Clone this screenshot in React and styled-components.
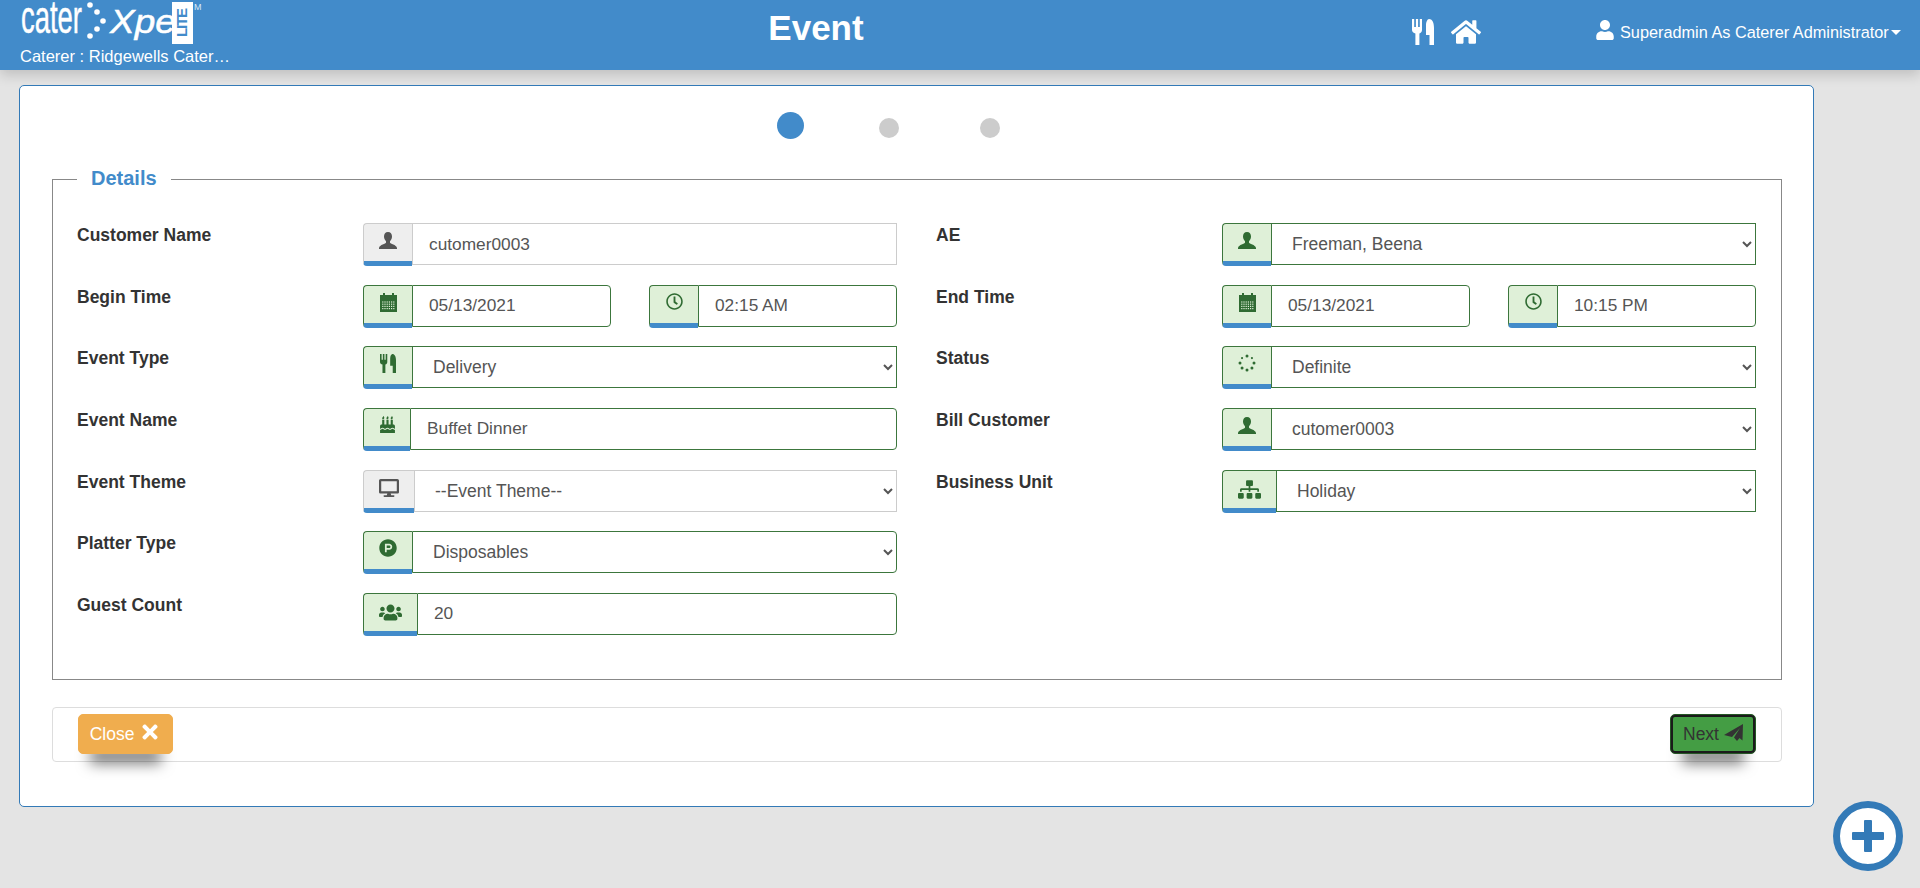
import React from "react";
import styled, { createGlobalStyle } from "styled-components";
import { FaBirthdayCake, FaDesktop, FaHome, FaProductHunt, FaRegClock, FaSitemap, FaTimes, FaUser, FaUsers } from "react-icons/fa";

const GlobalStyle = createGlobalStyle`
    html, body {
        margin: 0;
        overflow: hidden;
        background-color: #e4e4e4;
    }
    body {
        font-family: "Liberation Sans", Arial, sans-serif;
        color: #333;
    }
`
const Page = styled.div`
    min-height: 888px;
`
const Header = styled.header`
    background-color: #428bca;
    box-shadow: 0 5px 12px rgba(0, 0, 0, 0.16);
    color: #fff;
    display: grid;
    grid-template-columns: 400px 832px 363px 1fr;
    height: 70px;
`
const Brand = styled.div`
    padding-left: 20px;
`
const Logo = styled.svg`
    display: block;
    height: 46px;
    width: 190px;
`
const CatererName = styled.div`
    font-size: 16.5px;
    line-height: 20px;
    overflow: hidden;
    text-overflow: ellipsis;
    white-space: nowrap;
    width: 212px;
`
const Title = styled.h1`
    font-size: 35px;
    font-weight: bold;
    line-height: 56px;
    margin: 0;
    text-align: center;
`
const HeaderIcons = styled.div`
    align-items: center;
    display: flex;
    gap: 17px;
    height: 64px;
    padding-left: 180px;
`
const UserMenu = styled.div`
    align-items: center;
    display: flex;
    font-size: 16.3px;
    gap: 5px;
    height: 64px;
    white-space: nowrap;
`
const UserIcon = styled(FaUser)`
    margin-top: -4px;
`
const Caret = styled.span`
    border-left: 5px solid transparent;
    border-right: 5px solid transparent;
    border-top: 5px solid #fff;
    margin-left: -3px;
`
const Main = styled.main`
    padding: 15px 0 0 19px;
`
const Card = styled.div`
    background-color: #fff;
    border: 1px solid #337ab7;
    border-radius: 5px;
    box-sizing: border-box;
    height: 722px;
    padding: 26px 31px 0 32px;
    width: 1795px;
`
const Steps = styled.div`
    align-items: flex-end;
    display: flex;
    margin-bottom: 27px;
    padding-left: 725px;
`
const Dot = styled.span`
    background-color: ${props => props.$active ? "#428bca" : "#ccc"};
    border-radius: 50%;
    height: ${props => props.$active ? "27px" : "20px"};
    margin-bottom: ${props => props.$active ? "0" : "1px"};
    margin-left: ${props => props.$offset || 0}px;
    width: ${props => props.$active ? "27px" : "20px"};
`
const Fieldset = styled.fieldset`
    border: 1px solid #888;
    margin: 0;
    min-width: 0;
    padding: 31px 24px 44px;
`
const Legend = styled.legend`
    color: #428bca;
    font-size: 20px;
    font-weight: bold;
    line-height: 24px;
    padding: 0 14px 2px;
`
const Columns = styled.div`
    display: grid;
    gap: 39px;
    grid-template-columns: 820px 820px;
`
const Column = styled.div`
    display: flex;
    flex-direction: column;
    gap: 19.67px;
`
const Row = styled.div`
    display: grid;
    grid-template-columns: 286px minmax(0, 1fr);
`
const Label = styled.label`
    color: #333;
    font-size: 17.5px;
    font-weight: bold;
    line-height: 22px;
    padding-top: 1px;
`
const Pair = styled.div`
    display: grid;
    gap: 38px;
    grid-template-columns: minmax(0, 1fr) minmax(0, 1fr);
`
const Group = styled.div`
    display: flex;
    height: 42px;
`
const Addon = styled.span`
    align-items: flex-start;
    background-color: ${props => props.$plain ? "#eee" : "#dff0d8"};
    border: 1px solid ${props => props.$plain ? "#ccc" : "#3c763d"};
    border-bottom: 5px solid #428bca;
    border-radius: 4px 0 0 4px;
    border-right: 0;
    box-sizing: border-box;
    color: ${props => props.$plain ? "#555" : "#2f6b32"};
    display: flex;
    flex: none;
    font-size: 18px;
    height: 43px;
    justify-content: center;
    padding-top: 7px;
    width: ${props => props.$width || 49}px;
`
const Input = styled.input`
    background-color: #fff;
    border: 1px solid ${props => props.$plain ? "#ccc" : "#3c763d"};
    border-radius: ${props => props.$square ? "0" : "0 4px 4px 0"};
    box-sizing: border-box;
    color: #555;
    flex: 1;
    font-family: inherit;
    font-size: 17.3px;
    height: 42px;
    min-width: 0;
    padding: 0 16px;
`
const Select = styled.select`
    background-color: #fff;
    border: 1px solid ${props => props.$plain ? "#ccc" : "#3c763d"};
    border-radius: ${props => props.$round ? "0 4px 4px 0" : "0"};
    box-sizing: border-box;
    color: #555;
    flex: 1;
    font-family: inherit;
    font-size: 17.5px;
    height: 42px;
    min-width: 0;
    padding: 0 16px;
`
const Footer = styled.div`
    align-items: center;
    border: 1px solid #ddd;
    border-radius: 4px;
    box-sizing: border-box;
    display: flex;
    height: 55px;
    justify-content: space-between;
    margin-top: 27px;
    padding: 0 25px;
`
const Button = styled.button`
    align-items: center;
    background-color: ${props => props.$primary ? "#449d44" : "#f0ad4e"};
    border: 1px solid ${props => props.$primary ? "#255625" : "#f0ad4e"};
    border-radius: 5px;
    box-shadow: 0 22px 14px -12px rgba(0, 0, 0, 0.5);
    color: ${props => props.$primary ? "#333" : "#fff"};
    display: flex;
    font-family: inherit;
    font-size: 17.5px;
    gap: 5px;
    height: 40px;
    justify-content: center;
    outline: ${props => props.$primary ? "2px solid #1a1a1a" : "none"};
    outline-offset: -3px;
    padding: 0;
    width: ${props => props.$primary ? "86px" : "95px"};
`
const CloseIcon = styled(FaTimes)`
    margin-top: -5px;
`
const AddButton = styled.button`
    align-items: center;
    background-color: #fff;
    border: 7px solid #337ab7;
    border-radius: 50%;
    bottom: 17px;
    box-sizing: border-box;
    color: #337ab7;
    display: flex;
    height: 70px;
    justify-content: center;
    padding: 0;
    position: fixed;
    right: 17px;
    width: 70px;
`

function BustIcon() {
    return (
        <svg width="20" height="20" viewBox="0 0 20 20" fill="currentColor">
            <path d="M10 1c2.600 0 4 2 4 4.600 0 2-1 3.800-2 4.600v1.600c0 .8 6.500 2 7 5.200v1H1v-1c.5-3.200 7-4.400 7-5.200v-1.600C7 9.400 6 7.600 6 5.600 6 3 7.400 1 10 1z" />
        </svg>
    )
}

function CalendarIcon() {
    const cells = []
    for (let row = 0; row < 4; row++) {
        for (let col = 0; col < 6; col++) {
            cells.push(<rect key={`${row}-${col}`} x={2.2 + col * 2.2} y={8.4 + row * 2.2} width="1.2" height="1.2" fill="#dff0d8" />)
        }
    }
    return (
        <svg width="17" height="19" viewBox="0 0 17 19" fill="currentColor">
            <path d="M3 0h2v2h7V0h2v2h3v17H0V2h3z" />
            {cells}
        </svg>
    )
}

function CutleryIcon({ width = 16, height = 19 }) {
    return (
        <svg width={width} height={height} viewBox="0 0 22 26" fill="currentColor">
            <path d="M0 0h2.200v8h1.700V0h2.200v8h1.700V0H10v11c0 2-1.200 3-2.600 3.500V26H3.400V14.500C1.600 14 0 13 0 11z" />
            <path d="M17 0c3 0 5 3 5 9v17h-4.500V16H14V6c0-3 1.500-6 3-6z" />
        </svg>
    )
}

function DotsIcon() {
    const dots = [0, 45, 90, 135, 180, 225, 270, 315]
    return (
        <svg width="18" height="18" viewBox="-9 -9 18 18" fill="currentColor">
            {dots.map(angle => (
                <circle
                    key={angle}
                    cx={7 * Math.sin(angle * Math.PI / 180)}
                    cy={-7 * Math.cos(angle * Math.PI / 180)}
                    r={angle === 45 || angle === 315 ? 1.1 : 1.5}
                />
            ))}
        </svg>
    )
}

function SendIcon() {
    return (
        <svg width="19" height="17" viewBox="0 0 19 17" fill="currentColor" style={{ marginTop: -3 }}>
            <path d="M19 0L0 11l8 2L16 4l-6 9.500L13 17l2.500-3 3 2.500z" />
        </svg>
    )
}

function PlusIcon() {
    return (
        <svg width="32" height="32" viewBox="0 0 32 32" fill="currentColor">
            <path d="M12 1a1 1 0 0 1 1-1h6a1 1 0 0 1 1 1v11h11a1 1 0 0 1 1 1v6a1 1 0 0 1-1 1H20v11a1 1 0 0 1-1 1h-6a1 1 0 0 1-1-1V20H1a1 1 0 0 1-1-1v-6a1 1 0 0 1 1-1h11z" />
        </svg>
    )
}

function BrandLogo() {
    const dots = [[70, 5], [77, 12], [83, 21], [77, 29], [70, 36]]
    return (
        <Logo viewBox="0 0 190 46">
            <text transform="translate(1 33) scale(0.584 1)" fontFamily="Liberation Sans" fontSize="47" fill="#fff" stroke="#fff" strokeWidth="0.5">cater</text>
            {dots.map(([cx, cy]) => (
                <circle key={cy} cx={cx} cy={cy} r="2.800" fill="#fff" />
            ))}
            <text transform="translate(90 33) scale(1.12 1)" fontFamily="Liberation Sans" fontStyle="italic" fontSize="33" fill="#fff" stroke="#fff" strokeWidth="0.5">Xpe</text>
            <rect x="152" y="2" width="21" height="42" fill="#fff" />
            <text transform="translate(167 37) rotate(-90)" fontFamily="Liberation Sans" fontWeight="bold" fontSize="15" fill="#428bca" textLength="29">LITE</text>
            <text x="174" y="10" fontFamily="Liberation Sans" fontSize="9" fill="#dbe8f4">M</text>
        </Logo>
    )
}

function Field({ label, children }) {
    return (
        <Row>
            <Label>{label}</Label>
            {children}
        </Row>
    )
}

function TextGroup({ icon, value, width, plain, square }) {
    return (
        <Group>
            <Addon $plain={plain} $width={width}>{icon}</Addon>
            <Input defaultValue={value} $plain={plain} $square={square} />
        </Group>
    )
}

function SelectGroup({ icon, value, width, plain, round }) {
    return (
        <Group>
            <Addon $plain={plain} $width={width}>{icon}</Addon>
            <Select defaultValue={value} $plain={plain} $round={round}>
                <option>{value}</option>
            </Select>
        </Group>
    )
}

function DateTime({ date, time }) {
    return (
        <Pair>
            <TextGroup icon={<CalendarIcon />} value={date} />
            <TextGroup icon={<FaRegClock size={17} />} value={time} />
        </Pair>
    )
}

function App() {
    return (
        <Page>
            <GlobalStyle />
            <Header>
                <Brand>
                    <BrandLogo />
                    <CatererName>Caterer : Ridgewells Catering</CatererName>
                </Brand>
                <Title>Event</Title>
                <HeaderIcons>
                    <CutleryIcon width={22} height={26} />
                    <FaHome size={30} />
                </HeaderIcons>
                <UserMenu>
                    <UserIcon size={20} />
                    <span>Superadmin As Caterer Administrator</span>
                    <Caret />
                </UserMenu>
            </Header>
            <Main>
                <Card>
                    <Steps>
                        <Dot $active />
                        <Dot $offset={75} />
                        <Dot $offset={81} />
                    </Steps>
                    <Fieldset>
                        <Legend>Details</Legend>
                        <Columns>
                            <Column>
                                <Field label="Customer Name">
                                    <TextGroup icon={<BustIcon />} value="cutomer0003" plain square />
                                </Field>
                                <Field label="Begin Time">
                                    <DateTime date="05/13/2021" time="02:15 AM" />
                                </Field>
                                <Field label="Event Type">
                                    <SelectGroup icon={<CutleryIcon />} value="Delivery" />
                                </Field>
                                <Field label="Event Name">
                                    <TextGroup icon={<FaBirthdayCake size={17} />} value="Buffet Dinner" width={47} />
                                </Field>
                                <Field label="Event Theme">
                                    <SelectGroup icon={<FaDesktop size={20} />} value="--Event Theme--" width={51} plain />
                                </Field>
                                <Field label="Platter Type">
                                    <SelectGroup icon={<FaProductHunt size={18} />} value="Disposables" round />
                                </Field>
                                <Field label="Guest Count">
                                    <TextGroup icon={<FaUsers size={23} />} value="20" width={54} />
                                </Field>
                            </Column>
                            <Column>
                                <Field label="AE">
                                    <SelectGroup icon={<BustIcon />} value="Freeman, Beena" />
                                </Field>
                                <Field label="End Time">
                                    <DateTime date="05/13/2021" time="10:15 PM" />
                                </Field>
                                <Field label="Status">
                                    <SelectGroup icon={<DotsIcon />} value="Definite" />
                                </Field>
                                <Field label="Bill Customer">
                                    <SelectGroup icon={<BustIcon />} value="cutomer0003" />
                                </Field>
                                <Field label="Business Unit">
                                    <SelectGroup icon={<FaSitemap size={23} />} value="Holiday" width={54} />
                                </Field>
                            </Column>
                        </Columns>
                    </Fieldset>
                    <Footer>
                        <Button>Close <CloseIcon size={22} /></Button>
                        <Button $primary>Next <SendIcon /></Button>
                    </Footer>
                </Card>
            </Main>
            <AddButton><PlusIcon /></AddButton>
        </Page>
    )
}

export default App
